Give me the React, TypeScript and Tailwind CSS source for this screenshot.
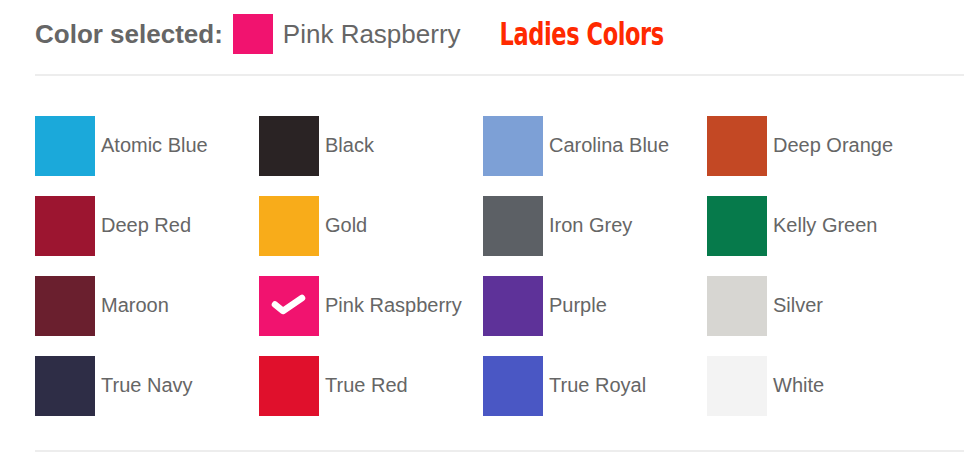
import React from 'react';

type Swatch = { name: string; color: string; selected?: boolean };

const swatches: Swatch[] = [
  { name: 'Atomic Blue', color: '#1ba9da' },
  { name: 'Black', color: '#2a2324' },
  { name: 'Carolina Blue', color: '#7da0d6' },
  { name: 'Deep Orange', color: '#c34824' },
  { name: 'Deep Red', color: '#9c1530' },
  { name: 'Gold', color: '#f8ac1a' },
  { name: 'Iron Grey', color: '#5c6065' },
  { name: 'Kelly Green', color: '#067a4b' },
  { name: 'Maroon', color: '#6a1f2e' },
  { name: 'Pink Raspberry', color: '#f1136f', selected: true },
  { name: 'Purple', color: '#5e3299' },
  { name: 'Silver', color: '#d7d6d2' },
  { name: 'True Navy', color: '#2e2d46' },
  { name: 'True Red', color: '#e0102c' },
  { name: 'True Royal', color: '#4a57c4' },
  { name: 'White', color: '#f3f3f3' },
];

const Check = () => (
  <svg viewBox="0 0 60 60" className="h-[60px] w-[60px]">
    <polyline
      points="16,28.5 24,35 43,22"
      fill="none"
      stroke="#fff"
      strokeWidth="6.5"
      strokeLinecap="round"
      strokeLinejoin="round"
    />
  </svg>
);

export default function App() {
  return (
    <div className="h-[456px] w-[964px] overflow-hidden bg-white pl-[35px] font-['Liberation_Sans',Arial,sans-serif] text-[#666]">
      <div className="flex h-[74px] items-start pt-[14px]">
        <span className="mt-[4px] text-[26px] font-bold leading-[32px]">Color selected:</span>
        <div className="ml-[10px] h-[40px] w-[40px] bg-[#f1136f]" />
        <span className="ml-[10px] mt-[4px] text-[26px] leading-[32px]">Pink Raspberry</span>
        <span className="ml-[39px] mt-[5px] origin-left scale-y-[1.28] font-['DejaVu_Sans_Condensed',sans-serif] text-[25px] font-bold leading-[32px] tracking-[-0.4px] text-[#ff2a00]">
          Ladies Colors
        </span>
      </div>
      <div className="h-[2px] bg-[#ededed]" />
      <div className="grid grid-cols-[224px_224px_224px_224px] gap-y-[20px] pt-[40px] pb-[34px]">
        {swatches.map((s) => (
          <div key={s.name} className="flex h-[60px] items-center">
            <div className="h-[60px] w-[60px] shrink-0" style={{ backgroundColor: s.color }}>
              {s.selected && <Check />}
            </div>
            <span className="ml-[6px] mb-[2px] text-[20px] leading-[24px]">{s.name}</span>
          </div>
        ))}
      </div>
      <div className="h-[2px] bg-[#ededed]" />
    </div>
  );
}
